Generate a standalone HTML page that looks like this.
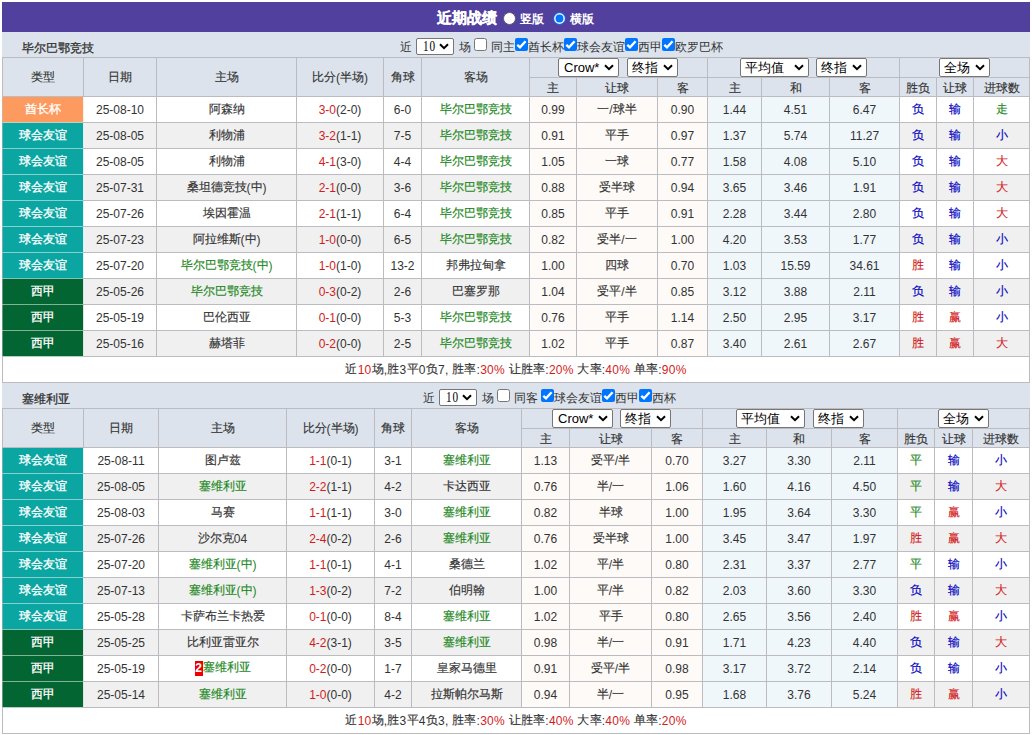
<!DOCTYPE html>
<html><head><meta charset="utf-8"><title>近期战绩</title><style>
html,body{margin:0;padding:0;background:#fff;width:1032px;height:735px;overflow:hidden}
body{font-family:"Liberation Sans", sans-serif;font-size:12px;color:#333333;position:relative}
.a{position:absolute}
.c{position:absolute;display:flex;align-items:center;justify-content:center;white-space:nowrap;overflow:hidden;line-height:1}
.k{-webkit-text-stroke:0.15px currentColor;position:relative;top:-0.5px}
.ty{color:#fff}
.ty .k{-webkit-text-stroke:0.3px #fff}
.hd{color:#333}
.hd > span{position:relative;top:0.5px}
.hd2 > span{position:relative;top:1.5px}
.sum span{letter-spacing:0.25px}
.gr{color:#228822}
.rd{color:#d21c1c}
.bl{color:#0000c0}
.rc{background:#ee0000;color:#fff;font-weight:bold;display:inline-block;width:8px;text-align:center;height:15px;line-height:15px;vertical-align:middle;font-size:12px;position:relative;top:-0.5px}
.tn{position:absolute;font-weight:normal;font-size:12px;color:#333;white-space:nowrap;-webkit-text-stroke:0.3px #333}
.ct{position:absolute;white-space:nowrap;line-height:25px;font-size:12px;color:#333;margin-top:3px}
.cb{position:absolute;width:13px;height:13px;line-height:0}
.cb svg{display:block}
.sel{position:absolute;box-sizing:border-box;border:1px solid #767676;border-radius:2px;background:#fff;color:#000;font-size:13px;white-space:nowrap;overflow:hidden}
.sel .st{position:absolute}
.sel10 .st{font-family:"Liberation Serif",serif;font-size:14px;letter-spacing:1px;transform:scaleX(0.8);transform-origin:0 0}
.sel .chev{position:absolute;right:4px}
.title{position:absolute;color:#fff;font-weight:bold;font-size:15px;white-space:nowrap;-webkit-text-stroke:0.3px #fff}
.ttl2{position:absolute;color:#fff;font-size:12px;font-weight:bold;white-space:nowrap}
</style></head>
<body>
<div class="a" style="left:2px;top:2px;width:1028px;height:30px;background:#51409e;"></div>
<div class="title" style="left:437px;top:3px;height:30px;line-height:30px">近期战绩</div>
<div class="a" style="left:503px;top:12px"><svg width="13" height="13" viewBox="0 0 13 13"><circle cx="6.5" cy="6.5" r="6" fill="#fff" stroke="#5a5a6a" stroke-width="1"/></svg></div>
<div class="ttl2" style="left:520px;top:4px;height:30px;line-height:30px">竖版</div>
<div class="a" style="left:553px;top:12px"><svg width="13" height="13" viewBox="0 0 13 13"><circle cx="6.5" cy="6.5" r="6.4" fill="#2a62d8"/><circle cx="6.5" cy="6.5" r="5.4" fill="#e8f8ff"/><circle cx="6.5" cy="6.5" r="3.9" fill="#0075ff"/></svg></div>
<div class="ttl2" style="left:570px;top:4px;height:30px;line-height:30px">横版</div>
<div class="a" style="left:2px;top:32px;width:1028px;height:25px;background:#dce3ec;"></div>
<div class="tn" style="left:22px;top:36px;height:25px;line-height:25px">毕尔巴鄂竞技</div>
<span class="ct" style="left:400px;top:32px">近</span>
<div class="sel sel10" style="left:416px;top:38px;width:38px;height:17px;"><span class="st" style="left:6px;top:0px;line-height:15px">10</span><svg class="chev" style="top:4.0px" width="10" height="7" viewBox="0 0 10 7"><path d="M1 1.2 L5 5.2 L9 1.2" fill="none" stroke="#000" stroke-width="2"/></svg></div>
<span class="ct" style="left:459px;top:32px">场</span>
<div class="cb" style="left:474px;top:38px"><svg width="13" height="13" viewBox="0 0 13 13"><rect x="0.5" y="0.5" width="12" height="12" rx="2" fill="#fff" stroke="#767676"/></svg></div>
<span class="ct" style="left:491px;top:32px">同主</span>
<div class="cb" style="left:515px;top:38px"><svg width="13" height="13" viewBox="0 0 13 13"><rect x="0" y="0" width="13" height="13" rx="2" fill="#0075ff"/><path d="M2.3 6.8 L5 9.3 L10.6 3.3" fill="none" stroke="#fff" stroke-width="2.4"/></svg></div>
<span class="ct" style="left:528px;top:32px">酋长杯</span>
<div class="cb" style="left:564px;top:38px"><svg width="13" height="13" viewBox="0 0 13 13"><rect x="0" y="0" width="13" height="13" rx="2" fill="#0075ff"/><path d="M2.3 6.8 L5 9.3 L10.6 3.3" fill="none" stroke="#fff" stroke-width="2.4"/></svg></div>
<span class="ct" style="left:577px;top:32px">球会友谊</span>
<div class="cb" style="left:625px;top:38px"><svg width="13" height="13" viewBox="0 0 13 13"><rect x="0" y="0" width="13" height="13" rx="2" fill="#0075ff"/><path d="M2.3 6.8 L5 9.3 L10.6 3.3" fill="none" stroke="#fff" stroke-width="2.4"/></svg></div>
<span class="ct" style="left:638px;top:32px">西甲</span>
<div class="cb" style="left:662px;top:38px"><svg width="13" height="13" viewBox="0 0 13 13"><rect x="0" y="0" width="13" height="13" rx="2" fill="#0075ff"/><path d="M2.3 6.8 L5 9.3 L10.6 3.3" fill="none" stroke="#fff" stroke-width="2.4"/></svg></div>
<span class="ct" style="left:675px;top:32px">欧罗巴杯</span>
<div class="a" style="left:2px;top:57px;width:1028px;height:326px;background:#bcbcc0;"></div>
<div class="c hd" style="left:3px;top:58px;width:80px;height:38px;background:#dce3ec;"><span><span class="k">类型</span></span></div>
<div class="c hd" style="left:84px;top:58px;width:72px;height:38px;background:#dce3ec;"><span><span class="k">日期</span></span></div>
<div class="c hd" style="left:157px;top:58px;width:139px;height:38px;background:#dce3ec;"><span><span class="k">主场</span></span></div>
<div class="c hd" style="left:297px;top:58px;width:86px;height:38px;background:#dce3ec;"><span><span class="k">比分</span>(<span class="k">半场</span>)</span></div>
<div class="c hd" style="left:384px;top:58px;width:37px;height:38px;background:#dce3ec;"><span><span class="k">角球</span></span></div>
<div class="c hd" style="left:422px;top:58px;width:107px;height:38px;background:#dce3ec;"><span><span class="k">客场</span></span></div>
<div class="c" style="left:530px;top:58px;width:177px;height:19px;background:#dce3ec;"><span></span></div>
<div class="c" style="left:708px;top:58px;width:191px;height:19px;background:#dce3ec;"><span></span></div>
<div class="c" style="left:900px;top:58px;width:129px;height:19px;background:#dce3ec;"><span></span></div>
<div class="c hd hd2" style="left:530px;top:78px;width:46px;height:18px;background:#dce3ec;"><span><span class="k">主</span></span></div>
<div class="c hd hd2" style="left:577px;top:78px;width:80px;height:18px;background:#dce3ec;"><span><span class="k">让球</span></span></div>
<div class="c hd hd2" style="left:658px;top:78px;width:49px;height:18px;background:#dce3ec;"><span><span class="k">客</span></span></div>
<div class="c hd hd2" style="left:708px;top:78px;width:53px;height:18px;background:#dce3ec;"><span><span class="k">主</span></span></div>
<div class="c hd hd2" style="left:762px;top:78px;width:67px;height:18px;background:#dce3ec;"><span><span class="k">和</span></span></div>
<div class="c hd hd2" style="left:830px;top:78px;width:69px;height:18px;background:#dce3ec;"><span><span class="k">客</span></span></div>
<div class="c hd hd2" style="left:900px;top:78px;width:36px;height:18px;background:#dce3ec;"><span><span class="k">胜负</span></span></div>
<div class="c hd hd2" style="left:937px;top:78px;width:36px;height:18px;background:#dce3ec;"><span><span class="k">让球</span></span></div>
<div class="c hd hd2" style="left:974px;top:78px;width:55px;height:18px;background:#dce3ec;"><span><span class="k">进球数</span></span></div>
<div class="sel" style="left:558px;top:58px;width:61px;height:19px;"><span class="st" style="left:5px;top:0px;line-height:17px">Crow*</span><svg class="chev" style="top:5.0px" width="10" height="7" viewBox="0 0 10 7"><path d="M1 1.2 L5 5.2 L9 1.2" fill="none" stroke="#000" stroke-width="2"/></svg></div>
<div class="sel" style="left:627px;top:58px;width:51px;height:19px;"><span class="st" style="left:4px;top:0px;line-height:17px">终指</span><svg class="chev" style="top:5.0px" width="10" height="7" viewBox="0 0 10 7"><path d="M1 1.2 L5 5.2 L9 1.2" fill="none" stroke="#000" stroke-width="2"/></svg></div>
<div class="sel" style="left:740px;top:58px;width:69px;height:19px;"><span class="st" style="left:4px;top:0px;line-height:17px">平均值</span><svg class="chev" style="top:5.0px" width="10" height="7" viewBox="0 0 10 7"><path d="M1 1.2 L5 5.2 L9 1.2" fill="none" stroke="#000" stroke-width="2"/></svg></div>
<div class="sel" style="left:816px;top:58px;width:51px;height:19px;"><span class="st" style="left:4px;top:0px;line-height:17px">终指</span><svg class="chev" style="top:5.0px" width="10" height="7" viewBox="0 0 10 7"><path d="M1 1.2 L5 5.2 L9 1.2" fill="none" stroke="#000" stroke-width="2"/></svg></div>
<div class="sel" style="left:939px;top:58px;width:51px;height:19px;"><span class="st" style="left:4px;top:0px;line-height:17px">全场</span><svg class="chev" style="top:5.0px" width="10" height="7" viewBox="0 0 10 7"><path d="M1 1.2 L5 5.2 L9 1.2" fill="none" stroke="#000" stroke-width="2"/></svg></div>
<div class="c ty" style="left:3px;top:97px;width:80px;height:25px;background:#fd9a5f;"><span><span class="k">酋长杯</span></span></div>
<div class="c" style="left:84px;top:97px;width:72px;height:25px;background:#ffffff;"><span>25-08-10</span></div>
<div class="c" style="left:157px;top:97px;width:139px;height:25px;background:#ffffff;"><span><span class="k">阿森纳</span></span></div>
<div class="c" style="left:297px;top:97px;width:86px;height:25px;background:#ffffff;"><span><span class="rd">3-0</span>(2-0)</span></div>
<div class="c" style="left:384px;top:97px;width:37px;height:25px;background:#ffffff;"><span>6-0</span></div>
<div class="c" style="left:422px;top:97px;width:107px;height:25px;background:#ffffff;"><span><span class="gr"><span class="k">毕尔巴鄂竞技</span></span></span></div>
<div class="c" style="left:530px;top:97px;width:46px;height:25px;background:#fdfaf7;"><span>0.99</span></div>
<div class="c" style="left:577px;top:97px;width:80px;height:25px;background:#fdfaf7;"><span><span class="k">一</span>/<span class="k">球半</span></span></div>
<div class="c" style="left:658px;top:97px;width:49px;height:25px;background:#fdfaf7;"><span>0.90</span></div>
<div class="c" style="left:708px;top:97px;width:53px;height:25px;background:#f0f7fb;"><span>1.44</span></div>
<div class="c" style="left:762px;top:97px;width:67px;height:25px;background:#f0f7fb;"><span>4.51</span></div>
<div class="c" style="left:830px;top:97px;width:69px;height:25px;background:#f0f7fb;"><span>6.47</span></div>
<div class="c" style="left:900px;top:97px;width:36px;height:25px;background:#ffffff;"><span><span class="bl"><span class="k">负</span></span></span></div>
<div class="c" style="left:937px;top:97px;width:36px;height:25px;background:#ffffff;"><span><span class="bl"><span class="k">输</span></span></span></div>
<div class="c" style="left:974px;top:97px;width:55px;height:25px;background:#ffffff;"><span><span class="gr"><span class="k">走</span></span></span></div>
<div class="c ty" style="left:3px;top:123px;width:80px;height:25px;background:#0ba6a2;"><span><span class="k">球会友谊</span></span></div>
<div class="c" style="left:84px;top:123px;width:72px;height:25px;background:#f0f0f0;"><span>25-08-05</span></div>
<div class="c" style="left:157px;top:123px;width:139px;height:25px;background:#f0f0f0;"><span><span class="k">利物浦</span></span></div>
<div class="c" style="left:297px;top:123px;width:86px;height:25px;background:#f0f0f0;"><span><span class="rd">3-2</span>(1-1)</span></div>
<div class="c" style="left:384px;top:123px;width:37px;height:25px;background:#f0f0f0;"><span>7-5</span></div>
<div class="c" style="left:422px;top:123px;width:107px;height:25px;background:#f0f0f0;"><span><span class="gr"><span class="k">毕尔巴鄂竞技</span></span></span></div>
<div class="c" style="left:530px;top:123px;width:46px;height:25px;background:#fdfaf7;"><span>0.91</span></div>
<div class="c" style="left:577px;top:123px;width:80px;height:25px;background:#fdfaf7;"><span><span class="k">平手</span></span></div>
<div class="c" style="left:658px;top:123px;width:49px;height:25px;background:#fdfaf7;"><span>0.97</span></div>
<div class="c" style="left:708px;top:123px;width:53px;height:25px;background:#f0f7fb;"><span>1.37</span></div>
<div class="c" style="left:762px;top:123px;width:67px;height:25px;background:#f0f7fb;"><span>5.74</span></div>
<div class="c" style="left:830px;top:123px;width:69px;height:25px;background:#f0f7fb;"><span>11.27</span></div>
<div class="c" style="left:900px;top:123px;width:36px;height:25px;background:#f0f0f0;"><span><span class="bl"><span class="k">负</span></span></span></div>
<div class="c" style="left:937px;top:123px;width:36px;height:25px;background:#f0f0f0;"><span><span class="bl"><span class="k">输</span></span></span></div>
<div class="c" style="left:974px;top:123px;width:55px;height:25px;background:#f0f0f0;"><span><span class="bl"><span class="k">小</span></span></span></div>
<div class="c ty" style="left:3px;top:149px;width:80px;height:25px;background:#0ba6a2;"><span><span class="k">球会友谊</span></span></div>
<div class="c" style="left:84px;top:149px;width:72px;height:25px;background:#ffffff;"><span>25-08-05</span></div>
<div class="c" style="left:157px;top:149px;width:139px;height:25px;background:#ffffff;"><span><span class="k">利物浦</span></span></div>
<div class="c" style="left:297px;top:149px;width:86px;height:25px;background:#ffffff;"><span><span class="rd">4-1</span>(3-0)</span></div>
<div class="c" style="left:384px;top:149px;width:37px;height:25px;background:#ffffff;"><span>4-4</span></div>
<div class="c" style="left:422px;top:149px;width:107px;height:25px;background:#ffffff;"><span><span class="gr"><span class="k">毕尔巴鄂竞技</span></span></span></div>
<div class="c" style="left:530px;top:149px;width:46px;height:25px;background:#fdfaf7;"><span>1.05</span></div>
<div class="c" style="left:577px;top:149px;width:80px;height:25px;background:#fdfaf7;"><span><span class="k">一球</span></span></div>
<div class="c" style="left:658px;top:149px;width:49px;height:25px;background:#fdfaf7;"><span>0.77</span></div>
<div class="c" style="left:708px;top:149px;width:53px;height:25px;background:#f0f7fb;"><span>1.58</span></div>
<div class="c" style="left:762px;top:149px;width:67px;height:25px;background:#f0f7fb;"><span>4.08</span></div>
<div class="c" style="left:830px;top:149px;width:69px;height:25px;background:#f0f7fb;"><span>5.10</span></div>
<div class="c" style="left:900px;top:149px;width:36px;height:25px;background:#ffffff;"><span><span class="bl"><span class="k">负</span></span></span></div>
<div class="c" style="left:937px;top:149px;width:36px;height:25px;background:#ffffff;"><span><span class="bl"><span class="k">输</span></span></span></div>
<div class="c" style="left:974px;top:149px;width:55px;height:25px;background:#ffffff;"><span><span class="rd"><span class="k">大</span></span></span></div>
<div class="c ty" style="left:3px;top:175px;width:80px;height:25px;background:#0ba6a2;"><span><span class="k">球会友谊</span></span></div>
<div class="c" style="left:84px;top:175px;width:72px;height:25px;background:#f0f0f0;"><span>25-07-31</span></div>
<div class="c" style="left:157px;top:175px;width:139px;height:25px;background:#f0f0f0;"><span><span class="k">桑坦德竞技</span>(<span class="k">中</span>)</span></div>
<div class="c" style="left:297px;top:175px;width:86px;height:25px;background:#f0f0f0;"><span><span class="rd">2-1</span>(0-0)</span></div>
<div class="c" style="left:384px;top:175px;width:37px;height:25px;background:#f0f0f0;"><span>3-6</span></div>
<div class="c" style="left:422px;top:175px;width:107px;height:25px;background:#f0f0f0;"><span><span class="gr"><span class="k">毕尔巴鄂竞技</span></span></span></div>
<div class="c" style="left:530px;top:175px;width:46px;height:25px;background:#fdfaf7;"><span>0.88</span></div>
<div class="c" style="left:577px;top:175px;width:80px;height:25px;background:#fdfaf7;"><span><span class="k">受半球</span></span></div>
<div class="c" style="left:658px;top:175px;width:49px;height:25px;background:#fdfaf7;"><span>0.94</span></div>
<div class="c" style="left:708px;top:175px;width:53px;height:25px;background:#f0f7fb;"><span>3.65</span></div>
<div class="c" style="left:762px;top:175px;width:67px;height:25px;background:#f0f7fb;"><span>3.46</span></div>
<div class="c" style="left:830px;top:175px;width:69px;height:25px;background:#f0f7fb;"><span>1.91</span></div>
<div class="c" style="left:900px;top:175px;width:36px;height:25px;background:#f0f0f0;"><span><span class="bl"><span class="k">负</span></span></span></div>
<div class="c" style="left:937px;top:175px;width:36px;height:25px;background:#f0f0f0;"><span><span class="bl"><span class="k">输</span></span></span></div>
<div class="c" style="left:974px;top:175px;width:55px;height:25px;background:#f0f0f0;"><span><span class="rd"><span class="k">大</span></span></span></div>
<div class="c ty" style="left:3px;top:201px;width:80px;height:25px;background:#0ba6a2;"><span><span class="k">球会友谊</span></span></div>
<div class="c" style="left:84px;top:201px;width:72px;height:25px;background:#ffffff;"><span>25-07-26</span></div>
<div class="c" style="left:157px;top:201px;width:139px;height:25px;background:#ffffff;"><span><span class="k">埃因霍温</span></span></div>
<div class="c" style="left:297px;top:201px;width:86px;height:25px;background:#ffffff;"><span><span class="rd">2-1</span>(1-1)</span></div>
<div class="c" style="left:384px;top:201px;width:37px;height:25px;background:#ffffff;"><span>6-4</span></div>
<div class="c" style="left:422px;top:201px;width:107px;height:25px;background:#ffffff;"><span><span class="gr"><span class="k">毕尔巴鄂竞技</span></span></span></div>
<div class="c" style="left:530px;top:201px;width:46px;height:25px;background:#fdfaf7;"><span>0.85</span></div>
<div class="c" style="left:577px;top:201px;width:80px;height:25px;background:#fdfaf7;"><span><span class="k">平手</span></span></div>
<div class="c" style="left:658px;top:201px;width:49px;height:25px;background:#fdfaf7;"><span>0.91</span></div>
<div class="c" style="left:708px;top:201px;width:53px;height:25px;background:#f0f7fb;"><span>2.28</span></div>
<div class="c" style="left:762px;top:201px;width:67px;height:25px;background:#f0f7fb;"><span>3.44</span></div>
<div class="c" style="left:830px;top:201px;width:69px;height:25px;background:#f0f7fb;"><span>2.80</span></div>
<div class="c" style="left:900px;top:201px;width:36px;height:25px;background:#ffffff;"><span><span class="bl"><span class="k">负</span></span></span></div>
<div class="c" style="left:937px;top:201px;width:36px;height:25px;background:#ffffff;"><span><span class="bl"><span class="k">输</span></span></span></div>
<div class="c" style="left:974px;top:201px;width:55px;height:25px;background:#ffffff;"><span><span class="rd"><span class="k">大</span></span></span></div>
<div class="c ty" style="left:3px;top:227px;width:80px;height:25px;background:#0ba6a2;"><span><span class="k">球会友谊</span></span></div>
<div class="c" style="left:84px;top:227px;width:72px;height:25px;background:#f0f0f0;"><span>25-07-23</span></div>
<div class="c" style="left:157px;top:227px;width:139px;height:25px;background:#f0f0f0;"><span><span class="k">阿拉维斯</span>(<span class="k">中</span>)</span></div>
<div class="c" style="left:297px;top:227px;width:86px;height:25px;background:#f0f0f0;"><span><span class="rd">1-0</span>(0-0)</span></div>
<div class="c" style="left:384px;top:227px;width:37px;height:25px;background:#f0f0f0;"><span>6-5</span></div>
<div class="c" style="left:422px;top:227px;width:107px;height:25px;background:#f0f0f0;"><span><span class="gr"><span class="k">毕尔巴鄂竞技</span></span></span></div>
<div class="c" style="left:530px;top:227px;width:46px;height:25px;background:#fdfaf7;"><span>0.82</span></div>
<div class="c" style="left:577px;top:227px;width:80px;height:25px;background:#fdfaf7;"><span><span class="k">受半</span>/<span class="k">一</span></span></div>
<div class="c" style="left:658px;top:227px;width:49px;height:25px;background:#fdfaf7;"><span>1.00</span></div>
<div class="c" style="left:708px;top:227px;width:53px;height:25px;background:#f0f7fb;"><span>4.20</span></div>
<div class="c" style="left:762px;top:227px;width:67px;height:25px;background:#f0f7fb;"><span>3.53</span></div>
<div class="c" style="left:830px;top:227px;width:69px;height:25px;background:#f0f7fb;"><span>1.77</span></div>
<div class="c" style="left:900px;top:227px;width:36px;height:25px;background:#f0f0f0;"><span><span class="bl"><span class="k">负</span></span></span></div>
<div class="c" style="left:937px;top:227px;width:36px;height:25px;background:#f0f0f0;"><span><span class="bl"><span class="k">输</span></span></span></div>
<div class="c" style="left:974px;top:227px;width:55px;height:25px;background:#f0f0f0;"><span><span class="bl"><span class="k">小</span></span></span></div>
<div class="c ty" style="left:3px;top:253px;width:80px;height:25px;background:#0ba6a2;"><span><span class="k">球会友谊</span></span></div>
<div class="c" style="left:84px;top:253px;width:72px;height:25px;background:#ffffff;"><span>25-07-20</span></div>
<div class="c" style="left:157px;top:253px;width:139px;height:25px;background:#ffffff;"><span><span class="gr"><span class="k">毕尔巴鄂竞技</span>(<span class="k">中</span>)</span></span></div>
<div class="c" style="left:297px;top:253px;width:86px;height:25px;background:#ffffff;"><span><span class="rd">1-0</span>(1-0)</span></div>
<div class="c" style="left:384px;top:253px;width:37px;height:25px;background:#ffffff;"><span>13-2</span></div>
<div class="c" style="left:422px;top:253px;width:107px;height:25px;background:#ffffff;"><span><span class="k">邦弗拉甸拿</span></span></div>
<div class="c" style="left:530px;top:253px;width:46px;height:25px;background:#fdfaf7;"><span>1.00</span></div>
<div class="c" style="left:577px;top:253px;width:80px;height:25px;background:#fdfaf7;"><span><span class="k">四球</span></span></div>
<div class="c" style="left:658px;top:253px;width:49px;height:25px;background:#fdfaf7;"><span>0.70</span></div>
<div class="c" style="left:708px;top:253px;width:53px;height:25px;background:#f0f7fb;"><span>1.03</span></div>
<div class="c" style="left:762px;top:253px;width:67px;height:25px;background:#f0f7fb;"><span>15.59</span></div>
<div class="c" style="left:830px;top:253px;width:69px;height:25px;background:#f0f7fb;"><span>34.61</span></div>
<div class="c" style="left:900px;top:253px;width:36px;height:25px;background:#ffffff;"><span><span class="rd"><span class="k">胜</span></span></span></div>
<div class="c" style="left:937px;top:253px;width:36px;height:25px;background:#ffffff;"><span><span class="bl"><span class="k">输</span></span></span></div>
<div class="c" style="left:974px;top:253px;width:55px;height:25px;background:#ffffff;"><span><span class="bl"><span class="k">小</span></span></span></div>
<div class="c ty" style="left:3px;top:279px;width:80px;height:25px;background:#026532;"><span><span class="k">西甲</span></span></div>
<div class="c" style="left:84px;top:279px;width:72px;height:25px;background:#f0f0f0;"><span>25-05-26</span></div>
<div class="c" style="left:157px;top:279px;width:139px;height:25px;background:#f0f0f0;"><span><span class="gr"><span class="k">毕尔巴鄂竞技</span></span></span></div>
<div class="c" style="left:297px;top:279px;width:86px;height:25px;background:#f0f0f0;"><span><span class="rd">0-3</span>(0-2)</span></div>
<div class="c" style="left:384px;top:279px;width:37px;height:25px;background:#f0f0f0;"><span>2-6</span></div>
<div class="c" style="left:422px;top:279px;width:107px;height:25px;background:#f0f0f0;"><span><span class="k">巴塞罗那</span></span></div>
<div class="c" style="left:530px;top:279px;width:46px;height:25px;background:#fdfaf7;"><span>1.04</span></div>
<div class="c" style="left:577px;top:279px;width:80px;height:25px;background:#fdfaf7;"><span><span class="k">受平</span>/<span class="k">半</span></span></div>
<div class="c" style="left:658px;top:279px;width:49px;height:25px;background:#fdfaf7;"><span>0.85</span></div>
<div class="c" style="left:708px;top:279px;width:53px;height:25px;background:#f0f7fb;"><span>3.12</span></div>
<div class="c" style="left:762px;top:279px;width:67px;height:25px;background:#f0f7fb;"><span>3.88</span></div>
<div class="c" style="left:830px;top:279px;width:69px;height:25px;background:#f0f7fb;"><span>2.11</span></div>
<div class="c" style="left:900px;top:279px;width:36px;height:25px;background:#f0f0f0;"><span><span class="bl"><span class="k">负</span></span></span></div>
<div class="c" style="left:937px;top:279px;width:36px;height:25px;background:#f0f0f0;"><span><span class="bl"><span class="k">输</span></span></span></div>
<div class="c" style="left:974px;top:279px;width:55px;height:25px;background:#f0f0f0;"><span><span class="bl"><span class="k">小</span></span></span></div>
<div class="c ty" style="left:3px;top:305px;width:80px;height:25px;background:#026532;"><span><span class="k">西甲</span></span></div>
<div class="c" style="left:84px;top:305px;width:72px;height:25px;background:#ffffff;"><span>25-05-19</span></div>
<div class="c" style="left:157px;top:305px;width:139px;height:25px;background:#ffffff;"><span><span class="k">巴伦西亚</span></span></div>
<div class="c" style="left:297px;top:305px;width:86px;height:25px;background:#ffffff;"><span><span class="rd">0-1</span>(0-0)</span></div>
<div class="c" style="left:384px;top:305px;width:37px;height:25px;background:#ffffff;"><span>5-3</span></div>
<div class="c" style="left:422px;top:305px;width:107px;height:25px;background:#ffffff;"><span><span class="gr"><span class="k">毕尔巴鄂竞技</span></span></span></div>
<div class="c" style="left:530px;top:305px;width:46px;height:25px;background:#fdfaf7;"><span>0.76</span></div>
<div class="c" style="left:577px;top:305px;width:80px;height:25px;background:#fdfaf7;"><span><span class="k">平手</span></span></div>
<div class="c" style="left:658px;top:305px;width:49px;height:25px;background:#fdfaf7;"><span>1.14</span></div>
<div class="c" style="left:708px;top:305px;width:53px;height:25px;background:#f0f7fb;"><span>2.50</span></div>
<div class="c" style="left:762px;top:305px;width:67px;height:25px;background:#f0f7fb;"><span>2.95</span></div>
<div class="c" style="left:830px;top:305px;width:69px;height:25px;background:#f0f7fb;"><span>3.17</span></div>
<div class="c" style="left:900px;top:305px;width:36px;height:25px;background:#ffffff;"><span><span class="rd"><span class="k">胜</span></span></span></div>
<div class="c" style="left:937px;top:305px;width:36px;height:25px;background:#ffffff;"><span><span class="rd"><span class="k">赢</span></span></span></div>
<div class="c" style="left:974px;top:305px;width:55px;height:25px;background:#ffffff;"><span><span class="bl"><span class="k">小</span></span></span></div>
<div class="c ty" style="left:3px;top:331px;width:80px;height:25px;background:#026532;"><span><span class="k">西甲</span></span></div>
<div class="c" style="left:84px;top:331px;width:72px;height:25px;background:#f0f0f0;"><span>25-05-16</span></div>
<div class="c" style="left:157px;top:331px;width:139px;height:25px;background:#f0f0f0;"><span><span class="k">赫塔菲</span></span></div>
<div class="c" style="left:297px;top:331px;width:86px;height:25px;background:#f0f0f0;"><span><span class="rd">0-2</span>(0-0)</span></div>
<div class="c" style="left:384px;top:331px;width:37px;height:25px;background:#f0f0f0;"><span>2-5</span></div>
<div class="c" style="left:422px;top:331px;width:107px;height:25px;background:#f0f0f0;"><span><span class="gr"><span class="k">毕尔巴鄂竞技</span></span></span></div>
<div class="c" style="left:530px;top:331px;width:46px;height:25px;background:#fdfaf7;"><span>1.02</span></div>
<div class="c" style="left:577px;top:331px;width:80px;height:25px;background:#fdfaf7;"><span><span class="k">平手</span></span></div>
<div class="c" style="left:658px;top:331px;width:49px;height:25px;background:#fdfaf7;"><span>0.87</span></div>
<div class="c" style="left:708px;top:331px;width:53px;height:25px;background:#f0f7fb;"><span>3.40</span></div>
<div class="c" style="left:762px;top:331px;width:67px;height:25px;background:#f0f7fb;"><span>2.61</span></div>
<div class="c" style="left:830px;top:331px;width:69px;height:25px;background:#f0f7fb;"><span>2.67</span></div>
<div class="c" style="left:900px;top:331px;width:36px;height:25px;background:#f0f0f0;"><span><span class="rd"><span class="k">胜</span></span></span></div>
<div class="c" style="left:937px;top:331px;width:36px;height:25px;background:#f0f0f0;"><span><span class="rd"><span class="k">赢</span></span></span></div>
<div class="c" style="left:974px;top:331px;width:55px;height:25px;background:#f0f0f0;"><span><span class="rd"><span class="k">大</span></span></span></div>
<div class="a" style="left:83px;top:97px;width:1px;height:25px;background:#fff0e7;"></div>
<div class="a" style="left:3px;top:122px;width:80px;height:1px;background:#c2d0c0;"></div>
<div class="a" style="left:2px;top:97px;width:1px;height:25px;background:#d9ad94;"></div>
<div class="a" style="left:83px;top:123px;width:1px;height:25px;background:#daf2f1;"></div>
<div class="a" style="left:3px;top:148px;width:80px;height:1px;background:#85d2d0;"></div>
<div class="a" style="left:2px;top:123px;width:1px;height:25px;background:#6cb2b2;"></div>
<div class="a" style="left:83px;top:149px;width:1px;height:25px;background:#daf2f1;"></div>
<div class="a" style="left:3px;top:174px;width:80px;height:1px;background:#85d2d0;"></div>
<div class="a" style="left:2px;top:149px;width:1px;height:25px;background:#6cb2b2;"></div>
<div class="a" style="left:83px;top:175px;width:1px;height:25px;background:#daf2f1;"></div>
<div class="a" style="left:3px;top:200px;width:80px;height:1px;background:#85d2d0;"></div>
<div class="a" style="left:2px;top:175px;width:1px;height:25px;background:#6cb2b2;"></div>
<div class="a" style="left:83px;top:201px;width:1px;height:25px;background:#daf2f1;"></div>
<div class="a" style="left:3px;top:226px;width:80px;height:1px;background:#85d2d0;"></div>
<div class="a" style="left:2px;top:201px;width:1px;height:25px;background:#6cb2b2;"></div>
<div class="a" style="left:83px;top:227px;width:1px;height:25px;background:#daf2f1;"></div>
<div class="a" style="left:3px;top:252px;width:80px;height:1px;background:#85d2d0;"></div>
<div class="a" style="left:2px;top:227px;width:1px;height:25px;background:#6cb2b2;"></div>
<div class="a" style="left:83px;top:253px;width:1px;height:25px;background:#daf2f1;"></div>
<div class="a" style="left:3px;top:278px;width:80px;height:1px;background:#82c2b4;"></div>
<div class="a" style="left:2px;top:253px;width:1px;height:25px;background:#6cb2b2;"></div>
<div class="a" style="left:83px;top:279px;width:1px;height:25px;background:#d9e8e0;"></div>
<div class="a" style="left:3px;top:304px;width:80px;height:1px;background:#80b298;"></div>
<div class="a" style="left:2px;top:279px;width:1px;height:25px;background:#689580;"></div>
<div class="a" style="left:83px;top:305px;width:1px;height:25px;background:#d9e8e0;"></div>
<div class="a" style="left:3px;top:330px;width:80px;height:1px;background:#80b298;"></div>
<div class="a" style="left:2px;top:305px;width:1px;height:25px;background:#689580;"></div>
<div class="a" style="left:83px;top:331px;width:1px;height:25px;background:#d9e8e0;"></div>
<div class="a" style="left:3px;top:356px;width:80px;height:1px;background:#b3d1c2;"></div>
<div class="a" style="left:2px;top:331px;width:1px;height:25px;background:#689580;"></div>
<div class="c sum" style="left:3px;top:357px;width:1026px;height:25px;background:#ffffff;"><span><span class="k">近</span><span class="rd">10</span><span class="k">场</span>,<span class="k">胜</span>3<span class="k">平</span>0<span class="k">负</span>7, <span class="k">胜率</span>:<span class="rd">30%</span> <span class="k">让胜率</span>:<span class="rd">20%</span> <span class="k">大率</span>:<span class="rd">40%</span> <span class="k">单率</span>:<span class="rd">90%</span></span></div>
<div class="a" style="left:2px;top:383px;width:1028px;height:25px;background:#dce3ec;"></div>
<div class="tn" style="left:22px;top:387px;height:25px;line-height:25px">塞维利亚</div>
<span class="ct" style="left:423px;top:383px">近</span>
<div class="sel sel10" style="left:439px;top:389px;width:38px;height:17px;"><span class="st" style="left:6px;top:0px;line-height:15px">10</span><svg class="chev" style="top:4.0px" width="10" height="7" viewBox="0 0 10 7"><path d="M1 1.2 L5 5.2 L9 1.2" fill="none" stroke="#000" stroke-width="2"/></svg></div>
<span class="ct" style="left:482px;top:383px">场</span>
<div class="cb" style="left:497px;top:389px"><svg width="13" height="13" viewBox="0 0 13 13"><rect x="0.5" y="0.5" width="12" height="12" rx="2" fill="#fff" stroke="#767676"/></svg></div>
<span class="ct" style="left:514px;top:383px">同客</span>
<div class="cb" style="left:541px;top:389px"><svg width="13" height="13" viewBox="0 0 13 13"><rect x="0" y="0" width="13" height="13" rx="2" fill="#0075ff"/><path d="M2.3 6.8 L5 9.3 L10.6 3.3" fill="none" stroke="#fff" stroke-width="2.4"/></svg></div>
<span class="ct" style="left:554px;top:383px">球会友谊</span>
<div class="cb" style="left:602px;top:389px"><svg width="13" height="13" viewBox="0 0 13 13"><rect x="0" y="0" width="13" height="13" rx="2" fill="#0075ff"/><path d="M2.3 6.8 L5 9.3 L10.6 3.3" fill="none" stroke="#fff" stroke-width="2.4"/></svg></div>
<span class="ct" style="left:615px;top:383px">西甲</span>
<div class="cb" style="left:639px;top:389px"><svg width="13" height="13" viewBox="0 0 13 13"><rect x="0" y="0" width="13" height="13" rx="2" fill="#0075ff"/><path d="M2.3 6.8 L5 9.3 L10.6 3.3" fill="none" stroke="#fff" stroke-width="2.4"/></svg></div>
<span class="ct" style="left:652px;top:383px">西杯</span>
<div class="a" style="left:2px;top:408px;width:1028px;height:326px;background:#bcbcc0;"></div>
<div class="c hd" style="left:3px;top:409px;width:80px;height:38px;background:#dce3ec;"><span><span class="k">类型</span></span></div>
<div class="c hd" style="left:84px;top:409px;width:74px;height:38px;background:#dce3ec;"><span><span class="k">日期</span></span></div>
<div class="c hd" style="left:159px;top:409px;width:127px;height:38px;background:#dce3ec;"><span><span class="k">主场</span></span></div>
<div class="c hd" style="left:287px;top:409px;width:87px;height:38px;background:#dce3ec;"><span><span class="k">比分</span>(<span class="k">半场</span>)</span></div>
<div class="c hd" style="left:375px;top:409px;width:36px;height:38px;background:#dce3ec;"><span><span class="k">角球</span></span></div>
<div class="c hd" style="left:412px;top:409px;width:109px;height:38px;background:#dce3ec;"><span><span class="k">客场</span></span></div>
<div class="c" style="left:522px;top:409px;width:180px;height:19px;background:#dce3ec;"><span></span></div>
<div class="c" style="left:703px;top:409px;width:194px;height:19px;background:#dce3ec;"><span></span></div>
<div class="c" style="left:898px;top:409px;width:131px;height:19px;background:#dce3ec;"><span></span></div>
<div class="c hd hd2" style="left:522px;top:429px;width:47px;height:18px;background:#dce3ec;"><span><span class="k">主</span></span></div>
<div class="c hd hd2" style="left:570px;top:429px;width:81px;height:18px;background:#dce3ec;"><span><span class="k">让球</span></span></div>
<div class="c hd hd2" style="left:652px;top:429px;width:50px;height:18px;background:#dce3ec;"><span><span class="k">客</span></span></div>
<div class="c hd hd2" style="left:703px;top:429px;width:63px;height:18px;background:#dce3ec;"><span><span class="k">主</span></span></div>
<div class="c hd hd2" style="left:767px;top:429px;width:64px;height:18px;background:#dce3ec;"><span><span class="k">和</span></span></div>
<div class="c hd hd2" style="left:832px;top:429px;width:65px;height:18px;background:#dce3ec;"><span><span class="k">客</span></span></div>
<div class="c hd hd2" style="left:898px;top:429px;width:36px;height:18px;background:#dce3ec;"><span><span class="k">胜负</span></span></div>
<div class="c hd hd2" style="left:935px;top:429px;width:37px;height:18px;background:#dce3ec;"><span><span class="k">让球</span></span></div>
<div class="c hd hd2" style="left:973px;top:429px;width:56px;height:18px;background:#dce3ec;"><span><span class="k">进球数</span></span></div>
<div class="sel" style="left:552px;top:409px;width:61px;height:19px;"><span class="st" style="left:5px;top:0px;line-height:17px">Crow*</span><svg class="chev" style="top:5.0px" width="10" height="7" viewBox="0 0 10 7"><path d="M1 1.2 L5 5.2 L9 1.2" fill="none" stroke="#000" stroke-width="2"/></svg></div>
<div class="sel" style="left:620px;top:409px;width:51px;height:19px;"><span class="st" style="left:4px;top:0px;line-height:17px">终指</span><svg class="chev" style="top:5.0px" width="10" height="7" viewBox="0 0 10 7"><path d="M1 1.2 L5 5.2 L9 1.2" fill="none" stroke="#000" stroke-width="2"/></svg></div>
<div class="sel" style="left:736px;top:409px;width:69px;height:19px;"><span class="st" style="left:4px;top:0px;line-height:17px">平均值</span><svg class="chev" style="top:5.0px" width="10" height="7" viewBox="0 0 10 7"><path d="M1 1.2 L5 5.2 L9 1.2" fill="none" stroke="#000" stroke-width="2"/></svg></div>
<div class="sel" style="left:813px;top:409px;width:51px;height:19px;"><span class="st" style="left:4px;top:0px;line-height:17px">终指</span><svg class="chev" style="top:5.0px" width="10" height="7" viewBox="0 0 10 7"><path d="M1 1.2 L5 5.2 L9 1.2" fill="none" stroke="#000" stroke-width="2"/></svg></div>
<div class="sel" style="left:938px;top:409px;width:51px;height:19px;"><span class="st" style="left:4px;top:0px;line-height:17px">全场</span><svg class="chev" style="top:5.0px" width="10" height="7" viewBox="0 0 10 7"><path d="M1 1.2 L5 5.2 L9 1.2" fill="none" stroke="#000" stroke-width="2"/></svg></div>
<div class="c ty" style="left:3px;top:448px;width:80px;height:25px;background:#0ba6a2;"><span><span class="k">球会友谊</span></span></div>
<div class="c" style="left:84px;top:448px;width:74px;height:25px;background:#ffffff;"><span>25-08-11</span></div>
<div class="c" style="left:159px;top:448px;width:127px;height:25px;background:#ffffff;"><span><span class="k">图卢兹</span></span></div>
<div class="c" style="left:287px;top:448px;width:87px;height:25px;background:#ffffff;"><span><span class="rd">1-1</span>(0-1)</span></div>
<div class="c" style="left:375px;top:448px;width:36px;height:25px;background:#ffffff;"><span>3-1</span></div>
<div class="c" style="left:412px;top:448px;width:109px;height:25px;background:#ffffff;"><span><span class="gr"><span class="k">塞维利亚</span></span></span></div>
<div class="c" style="left:522px;top:448px;width:47px;height:25px;background:#fdfaf7;"><span>1.13</span></div>
<div class="c" style="left:570px;top:448px;width:81px;height:25px;background:#fdfaf7;"><span><span class="k">受平</span>/<span class="k">半</span></span></div>
<div class="c" style="left:652px;top:448px;width:50px;height:25px;background:#fdfaf7;"><span>0.70</span></div>
<div class="c" style="left:703px;top:448px;width:63px;height:25px;background:#f0f7fb;"><span>3.27</span></div>
<div class="c" style="left:767px;top:448px;width:64px;height:25px;background:#f0f7fb;"><span>3.30</span></div>
<div class="c" style="left:832px;top:448px;width:65px;height:25px;background:#f0f7fb;"><span>2.11</span></div>
<div class="c" style="left:898px;top:448px;width:36px;height:25px;background:#ffffff;"><span><span class="gr"><span class="k">平</span></span></span></div>
<div class="c" style="left:935px;top:448px;width:37px;height:25px;background:#ffffff;"><span><span class="bl"><span class="k">输</span></span></span></div>
<div class="c" style="left:973px;top:448px;width:56px;height:25px;background:#ffffff;"><span><span class="bl"><span class="k">小</span></span></span></div>
<div class="c ty" style="left:3px;top:474px;width:80px;height:25px;background:#0ba6a2;"><span><span class="k">球会友谊</span></span></div>
<div class="c" style="left:84px;top:474px;width:74px;height:25px;background:#f0f0f0;"><span>25-08-05</span></div>
<div class="c" style="left:159px;top:474px;width:127px;height:25px;background:#f0f0f0;"><span><span class="gr"><span class="k">塞维利亚</span></span></span></div>
<div class="c" style="left:287px;top:474px;width:87px;height:25px;background:#f0f0f0;"><span><span class="rd">2-2</span>(1-1)</span></div>
<div class="c" style="left:375px;top:474px;width:36px;height:25px;background:#f0f0f0;"><span>4-2</span></div>
<div class="c" style="left:412px;top:474px;width:109px;height:25px;background:#f0f0f0;"><span><span class="k">卡达西亚</span></span></div>
<div class="c" style="left:522px;top:474px;width:47px;height:25px;background:#fdfaf7;"><span>0.76</span></div>
<div class="c" style="left:570px;top:474px;width:81px;height:25px;background:#fdfaf7;"><span><span class="k">半</span>/<span class="k">一</span></span></div>
<div class="c" style="left:652px;top:474px;width:50px;height:25px;background:#fdfaf7;"><span>1.06</span></div>
<div class="c" style="left:703px;top:474px;width:63px;height:25px;background:#f0f7fb;"><span>1.60</span></div>
<div class="c" style="left:767px;top:474px;width:64px;height:25px;background:#f0f7fb;"><span>4.16</span></div>
<div class="c" style="left:832px;top:474px;width:65px;height:25px;background:#f0f7fb;"><span>4.50</span></div>
<div class="c" style="left:898px;top:474px;width:36px;height:25px;background:#f0f0f0;"><span><span class="gr"><span class="k">平</span></span></span></div>
<div class="c" style="left:935px;top:474px;width:37px;height:25px;background:#f0f0f0;"><span><span class="bl"><span class="k">输</span></span></span></div>
<div class="c" style="left:973px;top:474px;width:56px;height:25px;background:#f0f0f0;"><span><span class="rd"><span class="k">大</span></span></span></div>
<div class="c ty" style="left:3px;top:500px;width:80px;height:25px;background:#0ba6a2;"><span><span class="k">球会友谊</span></span></div>
<div class="c" style="left:84px;top:500px;width:74px;height:25px;background:#ffffff;"><span>25-08-03</span></div>
<div class="c" style="left:159px;top:500px;width:127px;height:25px;background:#ffffff;"><span><span class="k">马赛</span></span></div>
<div class="c" style="left:287px;top:500px;width:87px;height:25px;background:#ffffff;"><span><span class="rd">1-1</span>(1-1)</span></div>
<div class="c" style="left:375px;top:500px;width:36px;height:25px;background:#ffffff;"><span>3-0</span></div>
<div class="c" style="left:412px;top:500px;width:109px;height:25px;background:#ffffff;"><span><span class="gr"><span class="k">塞维利亚</span></span></span></div>
<div class="c" style="left:522px;top:500px;width:47px;height:25px;background:#fdfaf7;"><span>0.82</span></div>
<div class="c" style="left:570px;top:500px;width:81px;height:25px;background:#fdfaf7;"><span><span class="k">半球</span></span></div>
<div class="c" style="left:652px;top:500px;width:50px;height:25px;background:#fdfaf7;"><span>1.00</span></div>
<div class="c" style="left:703px;top:500px;width:63px;height:25px;background:#f0f7fb;"><span>1.95</span></div>
<div class="c" style="left:767px;top:500px;width:64px;height:25px;background:#f0f7fb;"><span>3.64</span></div>
<div class="c" style="left:832px;top:500px;width:65px;height:25px;background:#f0f7fb;"><span>3.30</span></div>
<div class="c" style="left:898px;top:500px;width:36px;height:25px;background:#ffffff;"><span><span class="gr"><span class="k">平</span></span></span></div>
<div class="c" style="left:935px;top:500px;width:37px;height:25px;background:#ffffff;"><span><span class="rd"><span class="k">赢</span></span></span></div>
<div class="c" style="left:973px;top:500px;width:56px;height:25px;background:#ffffff;"><span><span class="bl"><span class="k">小</span></span></span></div>
<div class="c ty" style="left:3px;top:526px;width:80px;height:25px;background:#0ba6a2;"><span><span class="k">球会友谊</span></span></div>
<div class="c" style="left:84px;top:526px;width:74px;height:25px;background:#f0f0f0;"><span>25-07-26</span></div>
<div class="c" style="left:159px;top:526px;width:127px;height:25px;background:#f0f0f0;"><span><span class="k">沙尔克</span>04</span></div>
<div class="c" style="left:287px;top:526px;width:87px;height:25px;background:#f0f0f0;"><span><span class="rd">2-4</span>(0-2)</span></div>
<div class="c" style="left:375px;top:526px;width:36px;height:25px;background:#f0f0f0;"><span>2-6</span></div>
<div class="c" style="left:412px;top:526px;width:109px;height:25px;background:#f0f0f0;"><span><span class="gr"><span class="k">塞维利亚</span></span></span></div>
<div class="c" style="left:522px;top:526px;width:47px;height:25px;background:#fdfaf7;"><span>0.76</span></div>
<div class="c" style="left:570px;top:526px;width:81px;height:25px;background:#fdfaf7;"><span><span class="k">受半球</span></span></div>
<div class="c" style="left:652px;top:526px;width:50px;height:25px;background:#fdfaf7;"><span>1.00</span></div>
<div class="c" style="left:703px;top:526px;width:63px;height:25px;background:#f0f7fb;"><span>3.45</span></div>
<div class="c" style="left:767px;top:526px;width:64px;height:25px;background:#f0f7fb;"><span>3.47</span></div>
<div class="c" style="left:832px;top:526px;width:65px;height:25px;background:#f0f7fb;"><span>1.97</span></div>
<div class="c" style="left:898px;top:526px;width:36px;height:25px;background:#f0f0f0;"><span><span class="rd"><span class="k">胜</span></span></span></div>
<div class="c" style="left:935px;top:526px;width:37px;height:25px;background:#f0f0f0;"><span><span class="rd"><span class="k">赢</span></span></span></div>
<div class="c" style="left:973px;top:526px;width:56px;height:25px;background:#f0f0f0;"><span><span class="rd"><span class="k">大</span></span></span></div>
<div class="c ty" style="left:3px;top:552px;width:80px;height:25px;background:#0ba6a2;"><span><span class="k">球会友谊</span></span></div>
<div class="c" style="left:84px;top:552px;width:74px;height:25px;background:#ffffff;"><span>25-07-20</span></div>
<div class="c" style="left:159px;top:552px;width:127px;height:25px;background:#ffffff;"><span><span class="gr"><span class="k">塞维利亚</span>(<span class="k">中</span>)</span></span></div>
<div class="c" style="left:287px;top:552px;width:87px;height:25px;background:#ffffff;"><span><span class="rd">1-1</span>(0-1)</span></div>
<div class="c" style="left:375px;top:552px;width:36px;height:25px;background:#ffffff;"><span>4-1</span></div>
<div class="c" style="left:412px;top:552px;width:109px;height:25px;background:#ffffff;"><span><span class="k">桑德兰</span></span></div>
<div class="c" style="left:522px;top:552px;width:47px;height:25px;background:#fdfaf7;"><span>1.02</span></div>
<div class="c" style="left:570px;top:552px;width:81px;height:25px;background:#fdfaf7;"><span><span class="k">平</span>/<span class="k">半</span></span></div>
<div class="c" style="left:652px;top:552px;width:50px;height:25px;background:#fdfaf7;"><span>0.80</span></div>
<div class="c" style="left:703px;top:552px;width:63px;height:25px;background:#f0f7fb;"><span>2.31</span></div>
<div class="c" style="left:767px;top:552px;width:64px;height:25px;background:#f0f7fb;"><span>3.37</span></div>
<div class="c" style="left:832px;top:552px;width:65px;height:25px;background:#f0f7fb;"><span>2.77</span></div>
<div class="c" style="left:898px;top:552px;width:36px;height:25px;background:#ffffff;"><span><span class="gr"><span class="k">平</span></span></span></div>
<div class="c" style="left:935px;top:552px;width:37px;height:25px;background:#ffffff;"><span><span class="bl"><span class="k">输</span></span></span></div>
<div class="c" style="left:973px;top:552px;width:56px;height:25px;background:#ffffff;"><span><span class="bl"><span class="k">小</span></span></span></div>
<div class="c ty" style="left:3px;top:578px;width:80px;height:25px;background:#0ba6a2;"><span><span class="k">球会友谊</span></span></div>
<div class="c" style="left:84px;top:578px;width:74px;height:25px;background:#f0f0f0;"><span>25-07-13</span></div>
<div class="c" style="left:159px;top:578px;width:127px;height:25px;background:#f0f0f0;"><span><span class="gr"><span class="k">塞维利亚</span>(<span class="k">中</span>)</span></span></div>
<div class="c" style="left:287px;top:578px;width:87px;height:25px;background:#f0f0f0;"><span><span class="rd">1-3</span>(0-2)</span></div>
<div class="c" style="left:375px;top:578px;width:36px;height:25px;background:#f0f0f0;"><span>7-2</span></div>
<div class="c" style="left:412px;top:578px;width:109px;height:25px;background:#f0f0f0;"><span><span class="k">伯明翰</span></span></div>
<div class="c" style="left:522px;top:578px;width:47px;height:25px;background:#fdfaf7;"><span>1.00</span></div>
<div class="c" style="left:570px;top:578px;width:81px;height:25px;background:#fdfaf7;"><span><span class="k">平</span>/<span class="k">半</span></span></div>
<div class="c" style="left:652px;top:578px;width:50px;height:25px;background:#fdfaf7;"><span>0.82</span></div>
<div class="c" style="left:703px;top:578px;width:63px;height:25px;background:#f0f7fb;"><span>2.03</span></div>
<div class="c" style="left:767px;top:578px;width:64px;height:25px;background:#f0f7fb;"><span>3.60</span></div>
<div class="c" style="left:832px;top:578px;width:65px;height:25px;background:#f0f7fb;"><span>3.30</span></div>
<div class="c" style="left:898px;top:578px;width:36px;height:25px;background:#f0f0f0;"><span><span class="bl"><span class="k">负</span></span></span></div>
<div class="c" style="left:935px;top:578px;width:37px;height:25px;background:#f0f0f0;"><span><span class="bl"><span class="k">输</span></span></span></div>
<div class="c" style="left:973px;top:578px;width:56px;height:25px;background:#f0f0f0;"><span><span class="rd"><span class="k">大</span></span></span></div>
<div class="c ty" style="left:3px;top:604px;width:80px;height:25px;background:#0ba6a2;"><span><span class="k">球会友谊</span></span></div>
<div class="c" style="left:84px;top:604px;width:74px;height:25px;background:#ffffff;"><span>25-05-28</span></div>
<div class="c" style="left:159px;top:604px;width:127px;height:25px;background:#ffffff;"><span><span class="k">卡萨布兰卡热爱</span></span></div>
<div class="c" style="left:287px;top:604px;width:87px;height:25px;background:#ffffff;"><span><span class="rd">0-1</span>(0-0)</span></div>
<div class="c" style="left:375px;top:604px;width:36px;height:25px;background:#ffffff;"><span>8-4</span></div>
<div class="c" style="left:412px;top:604px;width:109px;height:25px;background:#ffffff;"><span><span class="gr"><span class="k">塞维利亚</span></span></span></div>
<div class="c" style="left:522px;top:604px;width:47px;height:25px;background:#fdfaf7;"><span>1.02</span></div>
<div class="c" style="left:570px;top:604px;width:81px;height:25px;background:#fdfaf7;"><span><span class="k">平手</span></span></div>
<div class="c" style="left:652px;top:604px;width:50px;height:25px;background:#fdfaf7;"><span>0.80</span></div>
<div class="c" style="left:703px;top:604px;width:63px;height:25px;background:#f0f7fb;"><span>2.65</span></div>
<div class="c" style="left:767px;top:604px;width:64px;height:25px;background:#f0f7fb;"><span>3.56</span></div>
<div class="c" style="left:832px;top:604px;width:65px;height:25px;background:#f0f7fb;"><span>2.40</span></div>
<div class="c" style="left:898px;top:604px;width:36px;height:25px;background:#ffffff;"><span><span class="rd"><span class="k">胜</span></span></span></div>
<div class="c" style="left:935px;top:604px;width:37px;height:25px;background:#ffffff;"><span><span class="rd"><span class="k">赢</span></span></span></div>
<div class="c" style="left:973px;top:604px;width:56px;height:25px;background:#ffffff;"><span><span class="bl"><span class="k">小</span></span></span></div>
<div class="c ty" style="left:3px;top:630px;width:80px;height:25px;background:#026532;"><span><span class="k">西甲</span></span></div>
<div class="c" style="left:84px;top:630px;width:74px;height:25px;background:#f0f0f0;"><span>25-05-25</span></div>
<div class="c" style="left:159px;top:630px;width:127px;height:25px;background:#f0f0f0;"><span><span class="k">比利亚雷亚尔</span></span></div>
<div class="c" style="left:287px;top:630px;width:87px;height:25px;background:#f0f0f0;"><span><span class="rd">4-2</span>(3-1)</span></div>
<div class="c" style="left:375px;top:630px;width:36px;height:25px;background:#f0f0f0;"><span>3-5</span></div>
<div class="c" style="left:412px;top:630px;width:109px;height:25px;background:#f0f0f0;"><span><span class="gr"><span class="k">塞维利亚</span></span></span></div>
<div class="c" style="left:522px;top:630px;width:47px;height:25px;background:#fdfaf7;"><span>0.98</span></div>
<div class="c" style="left:570px;top:630px;width:81px;height:25px;background:#fdfaf7;"><span><span class="k">半</span>/<span class="k">一</span></span></div>
<div class="c" style="left:652px;top:630px;width:50px;height:25px;background:#fdfaf7;"><span>0.91</span></div>
<div class="c" style="left:703px;top:630px;width:63px;height:25px;background:#f0f7fb;"><span>1.71</span></div>
<div class="c" style="left:767px;top:630px;width:64px;height:25px;background:#f0f7fb;"><span>4.23</span></div>
<div class="c" style="left:832px;top:630px;width:65px;height:25px;background:#f0f7fb;"><span>4.40</span></div>
<div class="c" style="left:898px;top:630px;width:36px;height:25px;background:#f0f0f0;"><span><span class="bl"><span class="k">负</span></span></span></div>
<div class="c" style="left:935px;top:630px;width:37px;height:25px;background:#f0f0f0;"><span><span class="bl"><span class="k">输</span></span></span></div>
<div class="c" style="left:973px;top:630px;width:56px;height:25px;background:#f0f0f0;"><span><span class="rd"><span class="k">大</span></span></span></div>
<div class="c ty" style="left:3px;top:656px;width:80px;height:25px;background:#026532;"><span><span class="k">西甲</span></span></div>
<div class="c" style="left:84px;top:656px;width:74px;height:25px;background:#ffffff;"><span>25-05-19</span></div>
<div class="c" style="left:159px;top:656px;width:127px;height:25px;background:#ffffff;"><span><span class="rc">2</span><span class="gr"><span class="k">塞维利亚</span></span></span></div>
<div class="c" style="left:287px;top:656px;width:87px;height:25px;background:#ffffff;"><span><span class="rd">0-2</span>(0-0)</span></div>
<div class="c" style="left:375px;top:656px;width:36px;height:25px;background:#ffffff;"><span>1-7</span></div>
<div class="c" style="left:412px;top:656px;width:109px;height:25px;background:#ffffff;"><span><span class="k">皇家马德里</span></span></div>
<div class="c" style="left:522px;top:656px;width:47px;height:25px;background:#fdfaf7;"><span>0.91</span></div>
<div class="c" style="left:570px;top:656px;width:81px;height:25px;background:#fdfaf7;"><span><span class="k">受平</span>/<span class="k">半</span></span></div>
<div class="c" style="left:652px;top:656px;width:50px;height:25px;background:#fdfaf7;"><span>0.98</span></div>
<div class="c" style="left:703px;top:656px;width:63px;height:25px;background:#f0f7fb;"><span>3.17</span></div>
<div class="c" style="left:767px;top:656px;width:64px;height:25px;background:#f0f7fb;"><span>3.72</span></div>
<div class="c" style="left:832px;top:656px;width:65px;height:25px;background:#f0f7fb;"><span>2.14</span></div>
<div class="c" style="left:898px;top:656px;width:36px;height:25px;background:#ffffff;"><span><span class="bl"><span class="k">负</span></span></span></div>
<div class="c" style="left:935px;top:656px;width:37px;height:25px;background:#ffffff;"><span><span class="bl"><span class="k">输</span></span></span></div>
<div class="c" style="left:973px;top:656px;width:56px;height:25px;background:#ffffff;"><span><span class="bl"><span class="k">小</span></span></span></div>
<div class="c ty" style="left:3px;top:682px;width:80px;height:25px;background:#026532;"><span><span class="k">西甲</span></span></div>
<div class="c" style="left:84px;top:682px;width:74px;height:25px;background:#f0f0f0;"><span>25-05-14</span></div>
<div class="c" style="left:159px;top:682px;width:127px;height:25px;background:#f0f0f0;"><span><span class="gr"><span class="k">塞维利亚</span></span></span></div>
<div class="c" style="left:287px;top:682px;width:87px;height:25px;background:#f0f0f0;"><span><span class="rd">1-0</span>(0-0)</span></div>
<div class="c" style="left:375px;top:682px;width:36px;height:25px;background:#f0f0f0;"><span>4-2</span></div>
<div class="c" style="left:412px;top:682px;width:109px;height:25px;background:#f0f0f0;"><span><span class="k">拉斯帕尔马斯</span></span></div>
<div class="c" style="left:522px;top:682px;width:47px;height:25px;background:#fdfaf7;"><span>0.94</span></div>
<div class="c" style="left:570px;top:682px;width:81px;height:25px;background:#fdfaf7;"><span><span class="k">半</span>/<span class="k">一</span></span></div>
<div class="c" style="left:652px;top:682px;width:50px;height:25px;background:#fdfaf7;"><span>0.95</span></div>
<div class="c" style="left:703px;top:682px;width:63px;height:25px;background:#f0f7fb;"><span>1.68</span></div>
<div class="c" style="left:767px;top:682px;width:64px;height:25px;background:#f0f7fb;"><span>3.76</span></div>
<div class="c" style="left:832px;top:682px;width:65px;height:25px;background:#f0f7fb;"><span>5.24</span></div>
<div class="c" style="left:898px;top:682px;width:36px;height:25px;background:#f0f0f0;"><span><span class="rd"><span class="k">胜</span></span></span></div>
<div class="c" style="left:935px;top:682px;width:37px;height:25px;background:#f0f0f0;"><span><span class="rd"><span class="k">赢</span></span></span></div>
<div class="c" style="left:973px;top:682px;width:56px;height:25px;background:#f0f0f0;"><span><span class="bl"><span class="k">小</span></span></span></div>
<div class="a" style="left:83px;top:448px;width:1px;height:25px;background:#daf2f1;"></div>
<div class="a" style="left:3px;top:473px;width:80px;height:1px;background:#85d2d0;"></div>
<div class="a" style="left:2px;top:448px;width:1px;height:25px;background:#6cb2b2;"></div>
<div class="a" style="left:83px;top:474px;width:1px;height:25px;background:#daf2f1;"></div>
<div class="a" style="left:3px;top:499px;width:80px;height:1px;background:#85d2d0;"></div>
<div class="a" style="left:2px;top:474px;width:1px;height:25px;background:#6cb2b2;"></div>
<div class="a" style="left:83px;top:500px;width:1px;height:25px;background:#daf2f1;"></div>
<div class="a" style="left:3px;top:525px;width:80px;height:1px;background:#85d2d0;"></div>
<div class="a" style="left:2px;top:500px;width:1px;height:25px;background:#6cb2b2;"></div>
<div class="a" style="left:83px;top:526px;width:1px;height:25px;background:#daf2f1;"></div>
<div class="a" style="left:3px;top:551px;width:80px;height:1px;background:#85d2d0;"></div>
<div class="a" style="left:2px;top:526px;width:1px;height:25px;background:#6cb2b2;"></div>
<div class="a" style="left:83px;top:552px;width:1px;height:25px;background:#daf2f1;"></div>
<div class="a" style="left:3px;top:577px;width:80px;height:1px;background:#85d2d0;"></div>
<div class="a" style="left:2px;top:552px;width:1px;height:25px;background:#6cb2b2;"></div>
<div class="a" style="left:83px;top:578px;width:1px;height:25px;background:#daf2f1;"></div>
<div class="a" style="left:3px;top:603px;width:80px;height:1px;background:#85d2d0;"></div>
<div class="a" style="left:2px;top:578px;width:1px;height:25px;background:#6cb2b2;"></div>
<div class="a" style="left:83px;top:604px;width:1px;height:25px;background:#daf2f1;"></div>
<div class="a" style="left:3px;top:629px;width:80px;height:1px;background:#82c2b4;"></div>
<div class="a" style="left:2px;top:604px;width:1px;height:25px;background:#6cb2b2;"></div>
<div class="a" style="left:83px;top:630px;width:1px;height:25px;background:#d9e8e0;"></div>
<div class="a" style="left:3px;top:655px;width:80px;height:1px;background:#80b298;"></div>
<div class="a" style="left:2px;top:630px;width:1px;height:25px;background:#689580;"></div>
<div class="a" style="left:83px;top:656px;width:1px;height:25px;background:#d9e8e0;"></div>
<div class="a" style="left:3px;top:681px;width:80px;height:1px;background:#80b298;"></div>
<div class="a" style="left:2px;top:656px;width:1px;height:25px;background:#689580;"></div>
<div class="a" style="left:83px;top:682px;width:1px;height:25px;background:#d9e8e0;"></div>
<div class="a" style="left:3px;top:707px;width:80px;height:1px;background:#b3d1c2;"></div>
<div class="a" style="left:2px;top:682px;width:1px;height:25px;background:#689580;"></div>
<div class="c sum" style="left:3px;top:708px;width:1026px;height:25px;background:#ffffff;"><span><span class="k">近</span><span class="rd">10</span><span class="k">场</span>,<span class="k">胜</span>3<span class="k">平</span>4<span class="k">负</span>3, <span class="k">胜率</span>:<span class="rd">30%</span> <span class="k">让胜率</span>:<span class="rd">40%</span> <span class="k">大率</span>:<span class="rd">40%</span> <span class="k">单率</span>:<span class="rd">20%</span></span></div>
</body></html>
